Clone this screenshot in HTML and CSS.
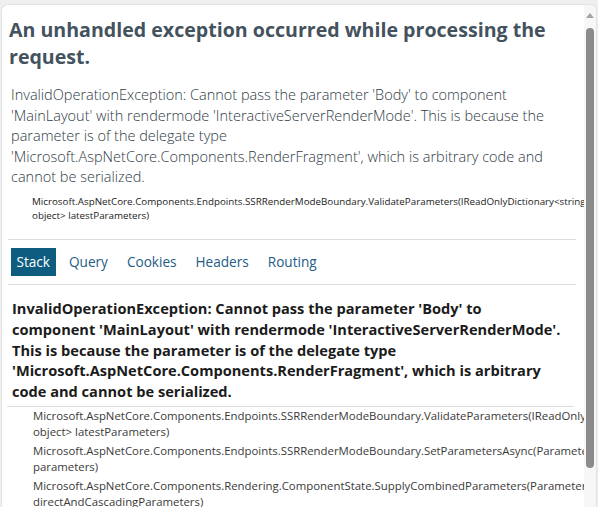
FILE: index.html
```html
<!DOCTYPE html>
<html lang="en">
<head>
<meta charset="utf-8">
<title>Internal Server Error</title>
<link rel="stylesheet" href="styles.css">
</head>
<body>
<div class="window">
  <div class="content">
    <h1 class="title">An unhandled exception occurred while processing the request.</h1>
    <div class="titleerror">InvalidOperationException: Cannot pass the parameter 'Body' to component 'MainLayout' with rendermode 'InteractiveServerRenderMode'. This is because the parameter is of the delegate type 'Microsoft.AspNetCore.Components.RenderFragment', which is arbitrary code and cannot be serialized.</div>
    <p class="location">Microsoft.AspNetCore.Components.Endpoints.SSRRenderModeBoundary.ValidateParameters(IReadOnlyDictionary&lt;string, object&gt; latestParameters)</p>
    <ul class="tabs">
      <li class="tab selected">Stack</li>
      <li class="tab">Query</li>
      <li class="tab">Cookies</li>
      <li class="tab">Headers</li>
      <li class="tab">Routing</li>
    </ul>
    <div class="stackpage">
      <h2 class="details">InvalidOperationException: Cannot pass the parameter 'Body' to<br>component 'MainLayout' with rendermode 'InteractiveServerRenderMode'.<br>This is because the parameter is of the delegate type<br>'Microsoft.AspNetCore.Components.RenderFragment', which is arbitrary<br>code and cannot be serialized.</h2>
      <ul class="frames">
        <li class="frame">Microsoft.AspNetCore.Components.Endpoints.SSRRenderModeBoundary.ValidateParameters(IReadOnlyDictionary&lt;string, object&gt; latestParameters)</li>
        <li class="frame">Microsoft.AspNetCore.Components.Endpoints.SSRRenderModeBoundary.SetParametersAsync(ParameterView parameters)</li>
        <li class="frame">Microsoft.AspNetCore.Components.Rendering.ComponentState.SupplyCombinedParameters(ParameterView directAndCascadingParameters)</li>
        <li class="frame">Microsoft.AspNetCore.Components.Rendering.ComponentState.SetDirectParameters(ParameterView parameters)</li>
      </ul>
    </div>
  </div>
  <div class="scrollbar">
    <div class="arrow"></div>
    <div class="thumb"></div>
  </div>
</div>
</body>
</html>
```
FILE: styles.css
```css
html, body {
  margin: 0;
  padding: 0;
  height: 100%;
  overflow: hidden;
}

body {
  background: #efefef;
  font-family: "Open Sans", "Noto Sans", sans-serif;
  color: #222;
}

.window {
  box-sizing: border-box;
  margin: 4px 1px 0 1px;
  height: 503px;
  background: #fff;
  border: 1px solid #e3e3e3;
  border-bottom: none;
  border-radius: 7px 7px 0 0;
  display: flex;
  overflow: hidden;
}

.content {
  flex: 1;
  min-width: 0;
  overflow: hidden;
  padding: 0 8px 0 6px;
}

.title {
  margin: 12px 0 0 1px;
  font-size: 19.6px;
  line-height: 26.5px;
  font-weight: 700;
  color: #44525e;
}

.titleerror {
  margin-top: 15px;
  padding-left: 3px;
  font-size: 14.5px;
  line-height: 20.6px;
  font-weight: 300;
  color: #2f3b45;
}

.location {
  margin: 7px 0 0 0;
  padding-left: 24px;
  font-size: 9.8px;
  line-height: 14.5px;
  color: #222;
}

.tabs {
  list-style: none;
  margin: 15px 0 0 0;
  padding: 8px 3px;
  border-top: 1px solid #ddd;
  border-bottom: 1px solid #ddd;
  display: flex;
  gap: 8px;
}

.tab {
  padding: 5px 5.5px;
  font-size: 13.6px;
  line-height: 18px;
  color: #245c85;
}

.tab.selected {
  background: #0e5c80;
  color: #fff;
}

.stackpage {
  margin: 0 2px 0 -1px;
}

.details {
  margin: 13px 0 0 0;
  padding: 0 0 4px 5px;
  border-bottom: 1px solid #ddd;
  font-size: 14.6px;
  line-height: 20.8px;
  font-weight: 700;
  color: #1b1b1b;
  white-space: nowrap;
  overflow: hidden;
}

.frames {
  list-style: none;
  margin: 1px 0 0 0;
  padding: 0 0 0 26px;
}

.frame {
  margin-bottom: 3px;
  font-size: 11.4px;
  line-height: 16px;
  color: #3a3a3a;
}

.scrollbar {
  width: 12px;
  flex: none;
  background: #f7f7f7;
  display: flex;
  flex-direction: column;
  align-items: center;
}

.arrow {
  width: 0;
  height: 0;
  margin-top: 8px;
  border-left: 4px solid transparent;
  border-right: 4px solid transparent;
  border-bottom: 5px solid #a3a3a3;
}

.thumb {
  margin-top: 10px;
  width: 8px;
  height: 440px;
  border-radius: 4px;
  background: #8b8b8b;
}
```
